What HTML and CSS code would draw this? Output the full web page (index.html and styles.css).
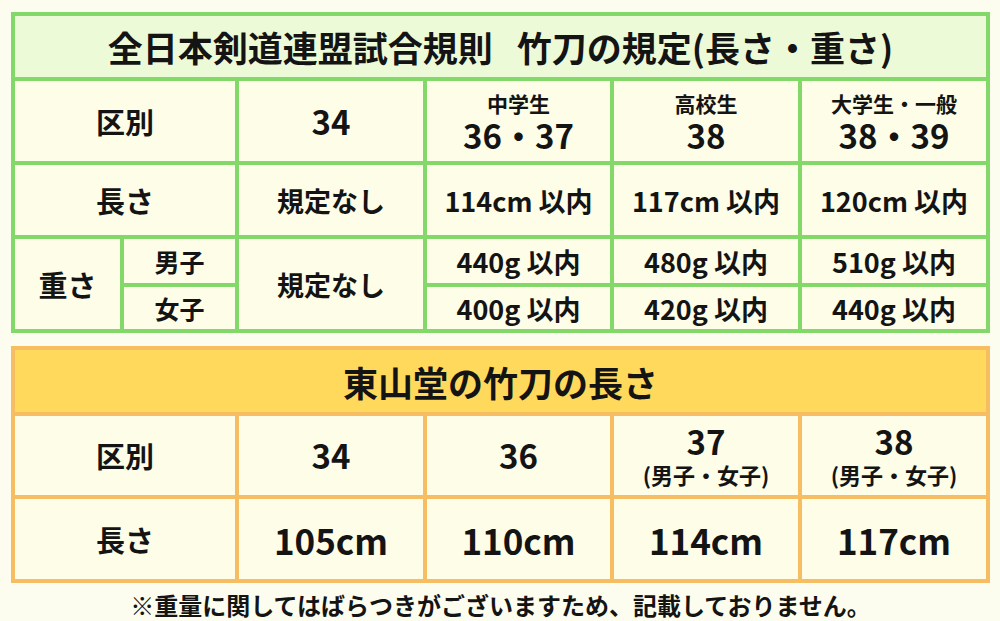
FILE: index.html
```html
<!DOCTYPE html>
<html lang="ja">
<head>
<meta charset="utf-8">
<title>竹刀の規定</title>
<link rel="stylesheet" href="styles.css">
</head>
<body>
<main class="page">
  <section class="grid grid-green">
    <div class="cell title title-green span6">全日本剣道連盟試合規則<span class="gap"></span>竹刀の規定(長さ・重さ)</div>

    <div class="cell label span2">区別</div>
    <div class="cell num">34</div>
    <div class="cell stack"><span class="sub">中学生</span><span class="num">36・37</span></div>
    <div class="cell stack"><span class="sub">高校生</span><span class="num">38</span></div>
    <div class="cell stack"><span class="sub">大学生・一般</span><span class="num">38・39</span></div>

    <div class="cell label span2">長さ</div>
    <div class="cell val">規定なし</div>
    <div class="cell val">114cm 以内</div>
    <div class="cell val">117cm 以内</div>
    <div class="cell val">120cm 以内</div>

    <div class="cell label rspan2">重さ</div>
    <div class="cell small">男子</div>
    <div class="cell val rspan2">規定なし</div>
    <div class="cell val">440g 以内</div>
    <div class="cell val">480g 以内</div>
    <div class="cell val">510g 以内</div>

    <div class="cell small">女子</div>
    <div class="cell val">400g 以内</div>
    <div class="cell val">420g 以内</div>
    <div class="cell val">440g 以内</div>
  </section>

  <section class="grid grid-orange">
    <div class="cell title title-orange span6">東山堂の竹刀の長さ</div>

    <div class="cell label span2">区別</div>
    <div class="cell num">34</div>
    <div class="cell num">36</div>
    <div class="cell stack"><span class="num">37</span><span class="sub2">(男子・女子)</span></div>
    <div class="cell stack"><span class="num">38</span><span class="sub2">(男子・女子)</span></div>

    <div class="cell label span2">長さ</div>
    <div class="cell big">105cm</div>
    <div class="cell big">110cm</div>
    <div class="cell big">114cm</div>
    <div class="cell big">117cm</div>
  </section>

  <p class="note">※重量に関してはばらつきがございますため、記載しておりません。</p>
</main>
</body>
</html>
```

FILE: styles.css
```css
html, body {
  margin: 0;
  padding: 0;
  background: #fdfdef;
}

body {
  font-family: "Noto Sans CJK JP", "Noto Sans", sans-serif;
  font-weight: 700;
  color: #141414;
}

.page {
  width: 979px;
  padding: 12px 0 0 11px;
}

.grid {
  display: grid;
  grid-template-columns: 105px 111px 184px 183px 184px 184px;
  gap: 4px;
  padding: 4px;
}

.grid-green {
  background: #83d86a;
  grid-template-rows: 61px 80px 70px 44px 42px;
}

.grid-orange {
  background: #f7bd62;
  grid-template-rows: 62px 79px 80px;
  margin-top: 13px;
}

.cell {
  background: #fdfde8;
  display: flex;
  align-items: center;
  justify-content: center;
  text-align: center;
  line-height: 1;
}

.span2 { grid-column: span 2; }
.span6 { grid-column: span 6; }
.rspan2 { grid-row: span 2; }

.title {
  font-size: 35px;
}

.title .gap {
  display: inline-block;
  width: 24px;
}

.title-green { background: #edfad8; }
.title-orange { background: #ffd95b; }

.label { font-size: 29px; }

.num { font-size: 33px; }

.stack {
  flex-direction: column;
  gap: 2px;
}

.stack .sub {
  font-size: 21px;
  line-height: 1.15;
  margin-top: 2px;
}

.stack .num {
  line-height: 1.1;
}

.stack .sub2 {
  font-size: 22px;
  line-height: 1.2;
}

.val { font-size: 27px; }

.small { font-size: 25px; }

.big { font-size: 35px; }

.note {
  margin: 8px 0 0;
  text-align: center;
  font-size: 24px;
  line-height: 28px;
}
```
